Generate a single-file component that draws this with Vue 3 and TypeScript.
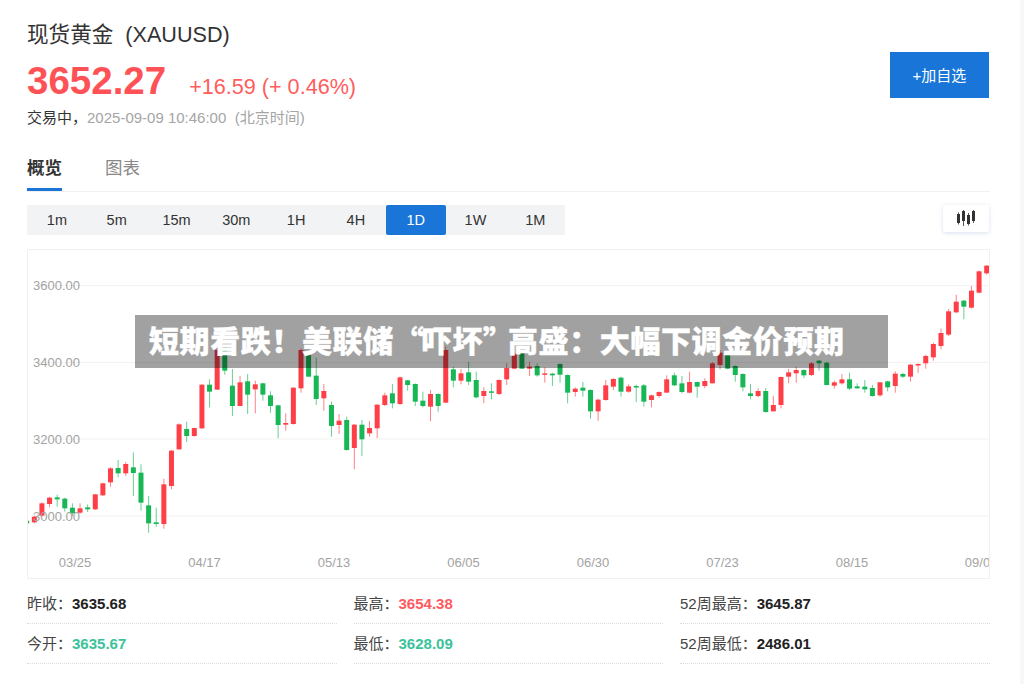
<script setup lang="ts">
type Candle = [string, number, number, number, number]

const periods = ['1m', '5m', '15m', '30m', '1H', '4H', '1D', '1W', '1M']

const stats = [
  { label: '昨收\uFF1A', value: '3635.68', tone: '' },
  { label: '最高\uFF1A', value: '3654.38', tone: 'up' },
  { label: '52周最高\uFF1A', value: '3645.87', tone: '' },
  { label: '今开\uFF1A', value: '3635.67', tone: 'down' },
  { label: '最低\uFF1A', value: '3628.09', tone: 'down' },
  { label: '52周最低\uFF1A', value: '2486.01', tone: '' },
]

const yLabels = [
  { text: '3600.00', y: 285.5 },
  { text: '3400.00', y: 362.5 },
  { text: '3200.00', y: 439 },
  { text: '3000.00', y: 516 },
]

const xLabels = [
  { text: '03/25', x: 75 },
  { text: '04/17', x: 204.5 },
  { text: '05/13', x: 334 },
  { text: '06/05', x: 463.5 },
  { text: '06/30', x: 593 },
  { text: '07/23', x: 722.5 },
  { text: '08/15', x: 852 },
  { text: '09/0', x: 977.5 },
]

// wick top, body top, body bottom, wick bottom, measured on a 3x crop from y=250
const raw: Candle[] = [
  ['g', 812, 812, 820, 820], ['r', 797, 800, 817, 820], ['r', 757, 760, 797, 800], ['r', 740, 743, 762, 772],
  ['g', 734, 742, 748, 770], ['g', 743, 746, 775, 785], ['g', 760, 773, 790, 798], ['r', 760, 775, 788, 792],
  ['g', 763, 772, 778, 786], ['r', 732, 733, 778, 780], ['r', 698, 700, 736, 738], ['r', 652, 655, 697, 710],
  ['g', 630, 654, 670, 682], ['r', 636, 642, 670, 678], ['g', 607, 652, 669, 738], ['g', 643, 668, 758, 782],
  ['g', 738, 766, 820, 848], ['g', 773, 817, 822, 830], ['r', 686, 703, 822, 836], ['r', 600, 602, 708, 718],
  ['r', 520, 523, 598, 600], ['g', 515, 537, 558, 576], ['r', 533, 534, 558, 560], ['r', 403, 404, 535, 537],
  ['g', 388, 404, 425, 472], ['r', 290, 300, 419, 420], ['g', 290, 300, 362, 374], ['g', 357, 407, 468, 498],
  ['r', 378, 397, 468, 468], ['g', 372, 394, 434, 492], ['r', 392, 403, 418, 490], ['g', 398, 400, 434, 452],
  ['g', 424, 436, 468, 488], ['g', 464, 466, 525, 565], ['r', 490, 519, 524, 542], ['r', 412, 413, 522, 524],
  ['r', 295, 300, 415, 428], ['g', 300, 310, 380, 380], ['g', 323, 377, 447, 465], ['r', 402, 423, 445, 482],
  ['g', 454, 465, 528, 560], ['r', 492, 512, 525, 552], ['g', 500, 510, 600, 602], ['r', 522, 524, 594, 658],
  ['g', 510, 524, 568, 618], ['r', 513, 534, 550, 560], ['r', 463, 464, 535, 564], ['r', 428, 436, 465, 468],
  ['g', 402, 430, 460, 475], ['r', 380, 382, 462, 465], ['g', 390, 391, 405, 422], ['g', 400, 402, 455, 468],
  ['g', 425, 452, 468, 472], ['r', 420, 432, 470, 514], ['g', 430, 432, 468, 485], ['r', 290, 300, 458, 458],
  ['g', 350, 358, 392, 412], ['r', 357, 370, 392, 403], ['g', 335, 367, 395, 405], ['g', 365, 390, 442, 445],
  ['r', 412, 423, 438, 460], ['g', 400, 424, 428, 448], ['r', 388, 390, 432, 435], ['r', 340, 354, 388, 405],
  ['r', 285, 310, 356, 358], ['g', 290, 300, 356, 357], ['r', 335, 350, 356, 378], ['g', 340, 348, 376, 380],
  ['r', 352, 370, 373, 398], ['g', 368, 371, 376, 408], ['g', 340, 342, 374, 398], ['g', 373, 375, 428, 460],
  ['r', 412, 416, 426, 440], ['g', 396, 413, 422, 440], ['g', 418, 420, 484, 506], ['r', 446, 449, 484, 512],
  ['r', 390, 406, 450, 452], ['r', 385, 387, 410, 420], ['g', 380, 383, 425, 440], ['r', 403, 409, 425, 428],
  ['g', 404, 408, 411, 456], ['g', 402, 406, 455, 470], ['r', 434, 436, 450, 472], ['r', 424, 426, 438, 443],
  ['r', 376, 388, 428, 428], ['g', 368, 376, 406, 408], ['g', 378, 400, 426, 430], ['r', 365, 396, 428, 430],
  ['g', 395, 396, 410, 443], ['r', 385, 393, 408, 415], ['r', 336, 340, 400, 400], ['r', 300, 308, 345, 358],
  ['g', 308, 310, 356, 358], ['g', 346, 348, 375, 395], ['g', 370, 372, 412, 424], ['g', 402, 430, 438, 448],
  ['r', 415, 423, 438, 442], ['g', 414, 423, 486, 488], ['r', 438, 465, 484, 484], ['r', 380, 381, 465, 475],
  ['r', 357, 367, 380, 400], ['r', 350, 360, 370, 398], ['g', 358, 360, 376, 384], ['r', 336, 340, 375, 378],
  ['g', 330, 332, 340, 362], ['g', 335, 338, 405, 406], ['r', 392, 397, 407, 416], ['r', 372, 388, 400, 404],
  ['g', 368, 388, 416, 420], ['g', 400, 409, 415, 416], ['g', 390, 410, 418, 428], ['g', 405, 414, 438, 440],
  ['r', 396, 397, 436, 440], ['g', 392, 394, 412, 424], ['r', 364, 371, 408, 428], ['g', 368, 372, 380, 384],
  ['r', 342, 344, 380, 395], ['r', 340, 342, 346, 368], ['r', 314, 318, 340, 356], ['r', 278, 282, 322, 332],
  ['r', 236, 249, 288, 298], ['r', 177, 184, 254, 258], ['r', 134, 155, 187, 190], ['g', 150, 152, 170, 208],
  ['r', 108, 122, 173, 176], ['r', 62, 64, 128, 130], ['r', 45, 47, 70, 74],
]

const toY = (v: number) => 250 + v / 3

const candles = raw.map((c, i) => ({
  color: c[0] === 'r' ? '#ff3f47' : '#17b755',
  x: 26.7 + 7.619 * i,
  wickTop: toY(c[1]),
  wickBottom: toY(c[4]),
  bodyTop: toY(c[2]),
  bodyHeight: Math.max((c[3] - c[2]) / 3, 1.5),
}))
</script>

<template>
  <div class="page">
    <div class="content">
      <header class="quote-head">
        <div class="quote-info">
          <h1 class="title">现货黄金&nbsp; (XAUUSD)</h1>
          <div class="price-row">
            <span class="price">3652.27</span>
            <span class="change">+16.59 (+ 0.46%)</span>
          </div>
          <div class="status">
            <span class="status-state">交易中&#xFF0C;</span>
            <span class="status-time">2025-09-09 10:46:00&nbsp; (北京时间)</span>
          </div>
        </div>
        <button class="btn-add">+加自选</button>
      </header>

      <nav class="tabs">
        <span class="tab active">概览</span>
        <span class="tab">图表</span>
      </nav>

      <div class="toolbar">
        <div class="periods">
          <span v-for="p in periods" :key="p" class="period" :class="{ active: p === '1D' }">{{ p }}</span>
        </div>
        <button class="btn-kline" aria-label="K线">
          <svg width="20" height="18" viewBox="0 0 20 18">
            <g fill="#333">
              <rect x="1" y="4" width="3" height="9" />
              <rect x="2.2" y="2.5" width="0.8" height="12" />
              <rect x="6" y="1" width="3" height="10" />
              <rect x="7.1" y="0" width="0.8" height="16" />
              <rect x="11" y="5" width="3" height="9" />
              <rect x="12.1" y="3" width="0.8" height="12.5" />
              <rect x="16" y="1" width="3" height="10" />
              <rect x="17.1" y="0" width="0.8" height="13" />
            </g>
          </svg>
        </button>
      </div>

      <div class="chart">
        <svg class="chart-svg" width="963" height="330" viewBox="27 249 963 330">
          <g stroke="#f3f3f3" stroke-width="1.2">
            <line v-for="l in yLabels" :key="l.text" x1="33" x2="990" :y1="l.y" :y2="l.y" />
          </g>
          <g v-for="(c, i) in candles" :key="i" :fill="c.color">
            <rect :x="c.x - 0.5" :y="c.wickTop" width="1" :height="c.wickBottom - c.wickTop" opacity="0.65" />
            <rect :x="c.x - 2.5" :y="c.bodyTop" width="5" :height="c.bodyHeight" />
          </g>
          <g class="axis-text">
            <text v-for="l in yLabels" :key="l.text" x="33" :y="l.y + 4.5">{{ l.text }}</text>
            <text v-for="l in xLabels" :key="l.text" :x="l.x" y="566.5" text-anchor="middle">{{ l.text }}</text>
          </g>
        </svg>
      </div>

      <ul class="stats">
        <li v-for="s in stats" :key="s.label" class="stat">
          <span class="stat-label">{{ s.label }}</span>
          <span class="stat-value" :class="s.tone">{{ s.value }}</span>
        </li>
      </ul>
    </div>
    <div class="scroll-strip"></div>

    <div class="banner">短期看跌&#xFF01;美联储<span class="quote-open">&#x201C;</span>吓坏<span class="quote-close">&#x201D;</span>高盛&#xFF1A;大幅下调金价预期</div>
  </div>
</template>

<style>
html,
body {
  margin: 0;
  background: #fff;
  overflow: hidden;
}
</style>

<style scoped>
.page {
  position: relative;
  display: flex;
  width: 1024px;
  height: 684px;
  overflow: hidden;
  font-family: "Liberation Sans", "Noto Sans CJK SC", sans-serif;
  color: #333;
}

.content {
  width: 963px;
  padding: 21px 0 0 27px;
}

.scroll-strip {
  width: 4px;
  margin-left: auto;
  background: #f6f7f9;
}

.quote-head {
  display: flex;
  justify-content: space-between;
  align-items: flex-start;
  padding-right: 1px;
}

.title {
  margin: 0;
  font-size: 21.6px;
  font-weight: 400;
  line-height: 28px;
}

.price-row {
  display: flex;
  align-items: baseline;
  gap: 23px;
  margin-top: 12px;
  line-height: 40px;
}

.price {
  font-size: 38.5px;
  font-weight: 700;
  color: #ff5256;
}

.change {
  font-size: 21.6px;
  color: #ff5d5d;
}

.status {
  margin-top: 1px;
  font-size: 15px;
  line-height: 20px;
}

.status-time {
  color: #a5a5a5;
}

.btn-add {
  width: 99px;
  height: 46px;
  margin-top: 31px;
  padding: 0 0 2px;
  border: none;
  background: #1976d8;
  color: #fff;
  font: inherit;
  font-size: 15px;
}

.tabs {
  display: flex;
  gap: 43px;
  margin-top: 23px;
  height: 41px;
  border-bottom: 1px solid #f0f0f0;
  box-sizing: border-box;
}

.tab {
  height: 40px;
  font-size: 17.5px;
  line-height: 34px;
  color: #888;
}

.tab.active {
  font-weight: 700;
  color: #333;
  border-bottom: 3px solid #1976d8;
  box-sizing: border-box;
}

.toolbar {
  display: flex;
  justify-content: space-between;
  align-items: flex-start;
  margin-top: 13px;
  padding-right: 1px;
}

.periods {
  display: flex;
  background: #f2f3f5;
}

.period {
  width: 59.8px;
  height: 30px;
  font-size: 14.5px;
  line-height: 30px;
  text-align: center;
}

.period.active {
  background: #1976d8;
  border-radius: 2px;
  color: #fff;
}

.btn-kline {
  display: flex;
  align-items: center;
  justify-content: center;
  width: 46px;
  height: 27px;
  padding: 0;
  border: none;
  border-radius: 2px;
  background: #fff;
  box-shadow: 0 1px 4px rgba(40, 80, 160, 0.18);
}

.chart {
  height: 330px;
  margin-top: 14px;
  box-sizing: border-box;
  position: relative;
}

.chart::after {
  content: "";
  position: absolute;
  inset: 0;
  border: 1px solid #f0f0f0;
  pointer-events: none;
}

.chart-svg {
  display: block;
}

.axis-text {
  font-size: 13px;
  fill: #a3a3a3;
}

.stats {
  display: grid;
  grid-template-columns: repeat(3, 309.5px);
  column-gap: 17px;
  margin: 5px 0 0;
  padding: 0;
  list-style: none;
}

.stat {
  height: 40px;
  box-sizing: border-box;
  border-bottom: 1px dotted #dcdcdc;
  font-size: 15px;
  line-height: 40px;
}

.stat-label {
  color: #444;
}

.stat-value {
  font-weight: 700;
  color: #222;
}

.stat-value.up {
  color: #ff5a5f;
}

.stat-value.down {
  color: #3cc29a;
}

.banner {
  position: absolute;
  left: 135px;
  top: 315px;
  width: 753px;
  height: 53px;
  padding-left: 14px;
  box-sizing: border-box;
  background: rgba(0, 0, 0, 0.37);
  color: #fff;
  font-family: "Noto Sans CJK SC", sans-serif;
  font-size: 30px;
  font-weight: 900;
  line-height: 48px;
  letter-spacing: 0.6px;
  white-space: nowrap;
  -webkit-text-stroke: 0.4px #fff;
}

.quote-open {
  letter-spacing: -2px;
}

.quote-close {
  letter-spacing: -5px;
}
</style>
